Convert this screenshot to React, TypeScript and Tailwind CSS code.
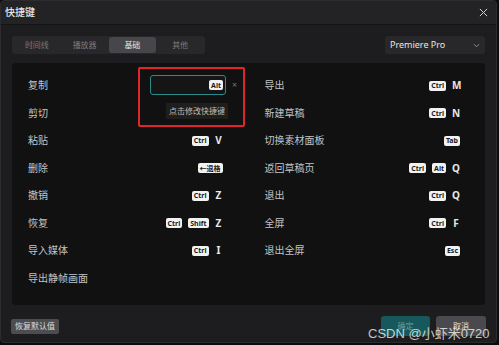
import React from 'react';

const font = { fontFamily: '"Noto Sans", "Noto Sans CJK SC", sans-serif' };

type Row = { label: string; keys: string[]; letter?: string; editing?: boolean };

const leftRows: Row[] = [
  { label: '复制', keys: [], editing: true },
  { label: '剪切', keys: [] },
  { label: '粘贴', keys: ['Ctrl'], letter: 'V' },
  { label: '删除', keys: ['←退格'] },
  { label: '撤销', keys: ['Ctrl'], letter: 'Z' },
  { label: '恢复', keys: ['Ctrl', 'Shift'], letter: 'Z' },
  { label: '导入媒体', keys: ['Ctrl'], letter: 'I' },
  { label: '导出静帧画面', keys: [] },
];

const rightRows: Row[] = [
  { label: '导出', keys: ['Ctrl'], letter: 'M' },
  { label: '新建草稿', keys: ['Ctrl'], letter: 'N' },
  { label: '切换素材面板', keys: ['Tab'] },
  { label: '返回草稿页', keys: ['Ctrl', 'Alt'], letter: 'Q' },
  { label: '退出', keys: ['Ctrl'], letter: 'Q' },
  { label: '全屏', keys: ['Ctrl'], letter: 'F' },
  { label: '退出全屏', keys: ['Esc'] },
];

function Key({ k }: { k: string }) {
  return (
    <span className="inline-flex h-[10px] items-center rounded-[2px] bg-[#f2f2f2] px-[2px] text-[7px] font-bold leading-none text-[#1a1a1a]">
      {k}
    </span>
  );
}

function ShortcutRow({ row }: { row: Row }) {
  return (
    <div className="relative flex h-[27.5px] items-center justify-between">
      <span className="text-[10px] text-[#c4c4c4]">{row.label}</span>
      {row.editing ? (
        <div className="absolute left-[110px] top-[-5px] h-[60px] w-[107px] rounded-[2px] border-2 border-[#e0262c]">
          <div className="absolute left-[10px] top-[6px] flex h-[20px] w-[76px] items-center justify-end rounded-[3px] border border-[#2b8c8e] bg-[#151515] pr-[2px]">
            <Key k="Alt" />
          </div>
          <span className="absolute left-[92px] top-[11px] text-[9px] leading-none text-[#777]">×</span>
          <div className="absolute left-[26px] top-[34px] flex h-[16px] w-[62px] items-center justify-center bg-[#1e1e1e] text-[8px] text-[#bdbdbd]">
            点击修改快捷键
          </div>
        </div>
      ) : (
        <div className="flex items-center gap-[6px]">
          {row.keys.map((k) => (
            <Key key={k} k={k} />
          ))}
          {row.letter && (
            <span className="w-[8px] text-center text-[10px] font-bold text-[#e8e8e8]">{row.letter}</span>
          )}
        </div>
      )}
    </div>
  );
}

export default function App() {
  const tabs = ['时间线', '播放器', '基础', '其他'];
  return (
    <div className="relative h-[345px] w-[499px] overflow-hidden bg-[#0b0b0b]" style={font}>
      <div className="flex h-[343px] w-[497px] flex-col overflow-hidden rounded-[4px] border border-[#2c2c2e] bg-[#1d1d1f]">
        <div className="flex h-[24px] shrink-0 items-center justify-between border-b border-[#141414] bg-[#232325] pl-[4px] pr-[8px]">
          <span className="text-[10px] font-medium text-[#e6e6e6]">快捷键</span>
          <svg width="9" height="9" viewBox="0 0 10 10" className="text-[#cfcfcf]">
            <path d="M1 1 L9 9 M9 1 L1 9" stroke="currentColor" strokeWidth="1.1" />
          </svg>
        </div>

        <div className="flex items-center justify-between px-[11px] pt-[11px]">
          <div className="flex h-[18px] w-[193px] items-center rounded-[3px] bg-[#28282a] p-[1px]">
            {tabs.map((t) => (
              <div
                key={t}
                className={
                  t === '基础'
                    ? 'flex h-full flex-1 items-center justify-center rounded-[3px] bg-[#47474b] text-[8px] text-[#e6e6e6]'
                    : 'flex h-full flex-1 items-center justify-center text-[8px] text-[#7a7a7a]'
                }
              >
                {t}
              </div>
            ))}
          </div>
          <div className="flex h-[18px] w-[100px] items-center justify-between rounded-[3px] bg-[#28282a] pl-[5px] pr-[5px]">
            <span className="text-[9px] text-[#e6e6e6]">Premiere Pro</span>
            <svg width="7" height="5" viewBox="0 0 8 5" className="text-[#9a9a9a]">
              <path d="M1 1 L4 4 L7 1" stroke="currentColor" strokeWidth="1" fill="none" />
            </svg>
          </div>
        </div>

        <div className="mx-[11px] mt-[9px] grid h-[242px] grid-cols-2 rounded-[4px] bg-[#111111] pt-[9px]">
          <div className="pl-[16px] pr-[26px]">
            {leftRows.map((r) => (
              <ShortcutRow key={r.label} row={r} />
            ))}
          </div>
          <div className="pl-[16px] pr-[25px]">
            {rightRows.map((r) => (
              <ShortcutRow key={r.label} row={r} />
            ))}
          </div>
        </div>

        <div className="flex items-center justify-between px-[10px] pt-[11px]">
          <div className="flex h-[15px] items-center rounded-[2px] bg-[#4d4d51] px-[4px] text-[8px] text-[#dcdcdc]">
            恢复默认值
          </div>
          <div className="flex items-center gap-[6px]">
            <div className="flex h-[20px] w-[49px] items-center justify-center rounded-[3px] bg-[#16585b] text-[8px] text-[#6f9c9d]">
              确定
            </div>
            <div className="flex h-[20px] w-[50px] items-center justify-center rounded-[3px] bg-[#4a4a4e] text-[8px] text-[#e0e0e0]">
              取消
            </div>
          </div>
        </div>
      </div>
      <span
        className="absolute left-[368px] top-[327px] text-[13px] leading-none text-white/75"
        style={{ fontFamily: '"Liberation Sans", "Noto Sans CJK SC", sans-serif' }}
      >
        CSDN @小虾米0720
      </span>
    </div>
  );
}
